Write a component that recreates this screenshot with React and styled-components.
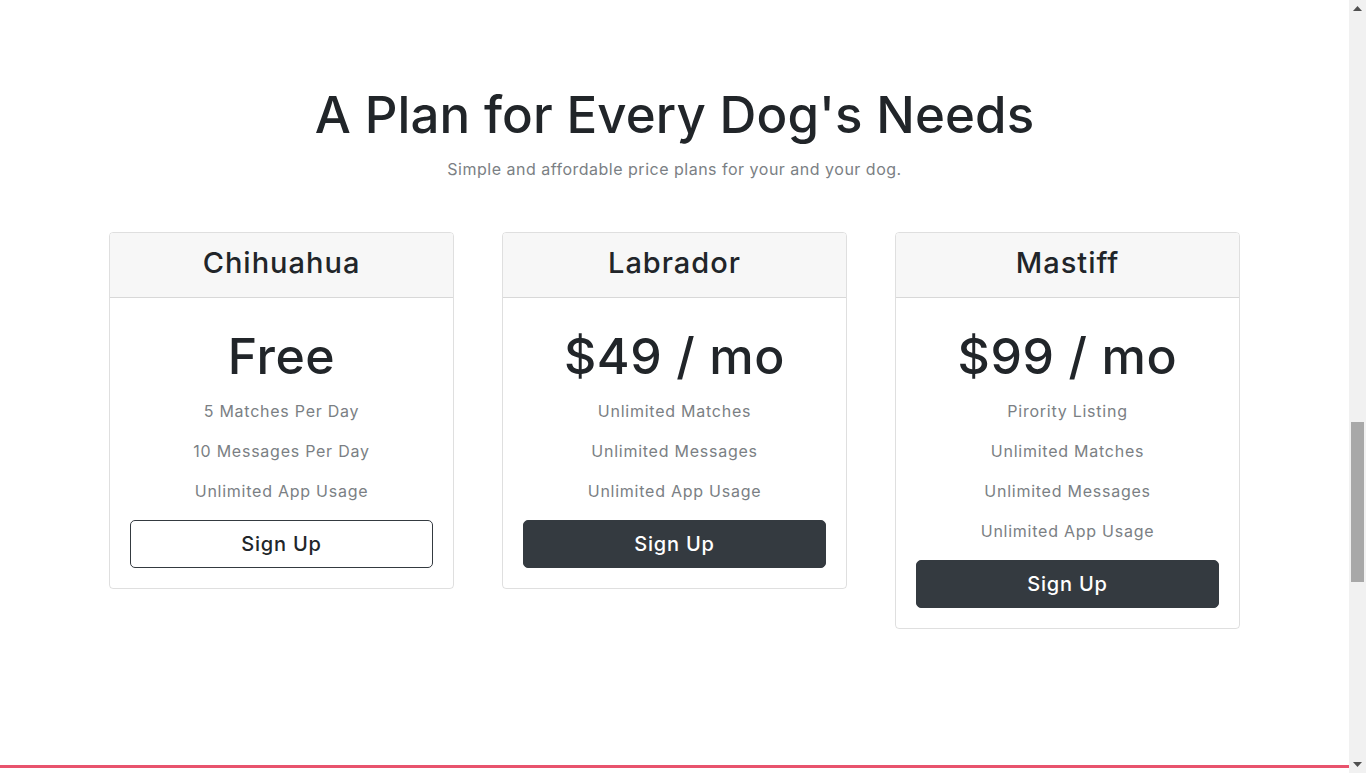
import * as React from "react"
import styled, { createGlobalStyle } from "styled-components"

const GlobalStyle = createGlobalStyle`
  html, body {
    margin: 0;
    padding: 0;
    background: #fff;
    overflow: hidden;
  }
  body {
    font-family: Inter, "Open Sans", "Liberation Sans", sans-serif;
    color: #212529;
  }
`

const Page = styled.div`
  display: flex;
  height: 773px;
`

const Main = styled.main`
  flex: 1;
  display: flex;
  flex-direction: column;
`

const PricingSection = styled.section`
  flex: 1;
  display: flex;
  flex-direction: column;
  align-items: center;
  padding-top: 84px;
`

const Title = styled.h1`
  margin: 0;
  font-size: 51px;
  font-weight: 500;
  line-height: 1.2;
  letter-spacing: 0.1px;
`

const Subtitle = styled.p`
  margin: 12px 0 0;
  font-size: 16px;
  line-height: 24px;
  letter-spacing: 0.5px;
  color: #7b7f84;
`

const CardRow = styled.div`
  display: flex;
  align-items: flex-start;
  gap: 48px;
  margin-top: 51px;
`

const Card = styled.div`
  width: 345px;
  border: 1px solid rgba(0, 0, 0, 0.125);
  border-radius: 4px;
  overflow: hidden;
  box-sizing: border-box;
`

const CardHeader = styled.div`
  height: 65px;
  box-sizing: border-box;
  padding-bottom: 6px;
  display: flex;
  align-items: center;
  justify-content: center;
  background: #f7f7f7;
  border-bottom: 1px solid rgba(0, 0, 0, 0.125);
  font-size: 29px;
  font-weight: 500;
  letter-spacing: 1px;
`

const CardBody = styled.div`
  display: flex;
  flex-direction: column;
  align-items: center;
  padding: 29px 20px 20px;
`

const Price = styled.div`
  font-size: 50px;
  font-weight: 500;
  line-height: 58px;
  letter-spacing: 0.6px;
`

const Features = styled.ul`
  list-style: none;
  margin: 6px 0 9px;
  padding: 0;
  text-align: center;
`

const Feature = styled.li`
  font-size: 16px;
  line-height: 40px;
  letter-spacing: 0.75px;
  color: #7b7f84;
`

const Button = styled.button`
  width: 100%;
  height: 48px;
  border-radius: 5px;
  font-family: inherit;
  font-size: 20px;
  font-weight: 500;
  letter-spacing: 0.8px;
  cursor: pointer;
  border: 1px solid #343a40;
  background: ${(p) => (p.$dark ? "#343a40" : "#fff")};
  color: ${(p) => (p.$dark ? "#fff" : "#212529")};
`

const NextSection = styled.div`
  height: 5px;
  border-top: 3px solid #e8536d;
`

const Scrollbar = styled.div`
  width: 17px;
  background: #f1f1f1;
  display: flex;
  flex-direction: column;
  align-items: center;
`

const Arrow = styled.div`
  height: 17px;
  display: flex;
  align-items: center;
  justify-content: center;
`

const Track = styled.div`
  flex: 1;
  width: 100%;
  display: flex;
  justify-content: center;
  padding-top: 405px;
  box-sizing: border-box;
`

const Thumb = styled.div`
  width: 13px;
  height: 160px;
  background: #a8a8a8;
`

const plans = [
  {
    name: "Chihuahua",
    price: "Free",
    features: ["5 Matches Per Day", "10 Messages Per Day", "Unlimited App Usage"],
    dark: false,
  },
  {
    name: "Labrador",
    price: "$49 / mo",
    features: ["Unlimited Matches", "Unlimited Messages", "Unlimited App Usage"],
    dark: true,
  },
  {
    name: "Mastiff",
    price: "$99 / mo",
    features: ["Pirority Listing", "Unlimited Matches", "Unlimited Messages", "Unlimited App Usage"],
    dark: true,
  },
]

const App = () => {
  return (
    <Page>
      <GlobalStyle />
      <Main>
        <PricingSection>
          <Title>A Plan for Every Dog's Needs</Title>
          <Subtitle>Simple and affordable price plans for your and your dog.</Subtitle>
          <CardRow>
            {plans.map((plan) => (
              <Card key={plan.name}>
                <CardHeader>{plan.name}</CardHeader>
                <CardBody>
                  <Price>{plan.price}</Price>
                  <Features>
                    {plan.features.map((f) => (
                      <Feature key={f}>{f}</Feature>
                    ))}
                  </Features>
                  <Button $dark={plan.dark}>Sign Up</Button>
                </CardBody>
              </Card>
            ))}
          </CardRow>
        </PricingSection>
        <NextSection />
      </Main>
      <Scrollbar>
        <Arrow>
          <svg width="9" height="5" viewBox="0 0 9 5"><path d="M0 5 L4.5 0 L9 5 Z" fill="#505050" /></svg>
        </Arrow>
        <Track>
          <Thumb />
        </Track>
        <Arrow>
          <svg width="9" height="5" viewBox="0 0 9 5"><path d="M0 0 L4.5 5 L9 0 Z" fill="#505050" /></svg>
        </Arrow>
      </Scrollbar>
    </Page>
  )
}

export default App
